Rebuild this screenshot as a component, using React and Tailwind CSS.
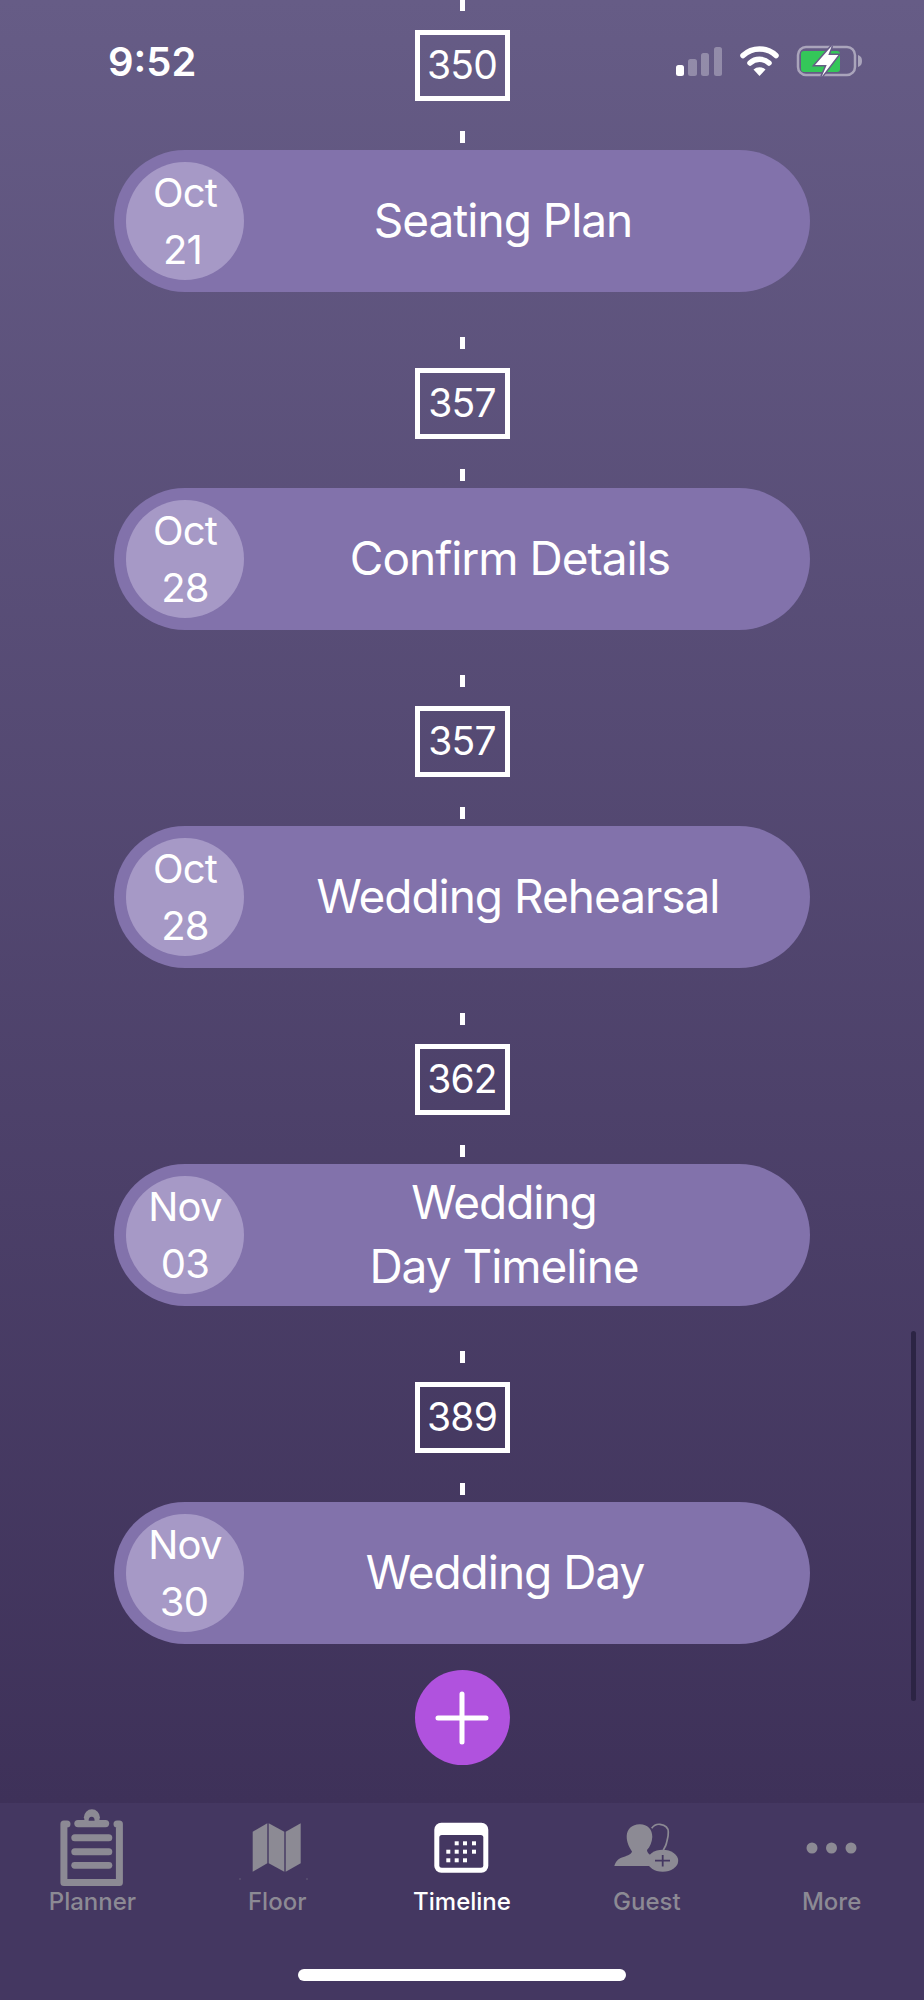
import React from 'react';

const steps = [
  { days: '350', month: 'Oct', day: '21', dayClass: 'pr-[5px]', title: ['Seating Plan'], titleClass: 'pr-[48px]' },
  { days: '357', month: 'Oct', day: '28', title: ['Confirm Details'], titleClass: 'pr-[34px]' },
  { days: '357', month: 'Oct', day: '28', title: ['Wedding Rehearsal'], titleClass: 'pr-[18px]' },
  { days: '362', month: 'Nov', day: '03', title: ['Wedding', 'Day Timeline'], titleClass: 'pr-[46px]' },
  { days: '389', month: 'Nov', day: '30', dayClass: 'pr-[2px]', title: ['Wedding Day'], titleClass: 'pr-[44px]' },
];

function Step({ step, first }) {
  return (
    <>
      {/* days-between connector */}
      <div className={first ? 'h-[11px] w-[5px] bg-white' : 'mt-[45px] h-[12px] w-[5px] bg-white'} />
      <div className="mt-[19px] flex h-[71px] w-[95px] items-center justify-center border-[5px] border-white pb-[2px] text-[39px] leading-none tracking-[-0.02em] text-white">
        {step.days}
      </div>
      <div className="mt-[30px] h-[12px] w-[5px] bg-white" />

      <div className="mt-[7px] flex h-[142px] w-[696px] items-center rounded-[71px] bg-[#8272ab] pl-[12px] text-white">
        <div className="flex h-[118px] w-[118px] shrink-0 flex-col items-center justify-center rounded-full bg-[#a699c6] pb-[1px] text-[40px] leading-[57px] tracking-[-0.02em]">
          <span>{step.month}</span>
          <span className={step.dayClass}>{step.day}</span>
        </div>
        <div className={`flex flex-1 flex-col items-center pb-[2px] text-[46px] leading-[64px] tracking-[-0.022em] ${step.titleClass}`}>
          {step.title.map((line) => (
            <span key={line}>{line}</span>
          ))}
        </div>
      </div>
    </>
  );
}

function StatusIcons() {
  return (
    <svg className="absolute left-[670px] top-[40px]" width="200" height="44" viewBox="670 40 200 44">
      <rect x="676" y="65" width="8" height="11" rx="2.5" fill="#fff" />
      <rect x="688" y="59" width="9" height="17" rx="2.5" fill="#fff" fillOpacity="0.3" />
      <rect x="701" y="53" width="8" height="23" rx="2.5" fill="#fff" fillOpacity="0.3" />
      <rect x="714" y="47" width="8" height="29" rx="2.5" fill="#fff" fillOpacity="0.3" />
      <path d="M743 55.5a24 24 0 0 1 33 0" fill="none" stroke="#fff" strokeWidth="5.5" strokeLinecap="round" />
      <path d="M750 63a14 14 0 0 1 19 0" fill="none" stroke="#fff" strokeWidth="5.5" strokeLinecap="round" />
      <path d="M753.5 69.5a9 9 0 0 1 12 0L759.5 76z" fill="#fff" />
      <rect x="798" y="47" width="57" height="28" rx="8" fill="none" stroke="#fff" strokeOpacity="0.45" strokeWidth="2.5" />
      <path d="M858 55c3 1 4 3 4 6s-1 5-4 6z" fill="#fff" fillOpacity="0.45" />
      <rect x="801" y="51" width="39" height="21" rx="3" fill="#34c759" />
      <path d="M831.700 46 815 65h11.700l-5 11.700L838.300 55h-10z" fill="#fff" stroke="#665c86" strokeWidth="3" paintOrder="stroke" />
    </svg>
  );
}

const grey = '#8c8a94';
const barColor = '#443761';

function PlannerIcon() {
  return (
    <svg width="80" height="80" viewBox="0 0 80 80" fill="none">
      <path d="M15 15H11.900V73.500H67.400V15H65" stroke={grey} strokeWidth="7" strokeLinecap="round" strokeLinejoin="round" />
      <path d="M26 14.600H53.500" stroke={grey} strokeWidth="7.400" strokeLinecap="round" />
      <circle cx="39.900" cy="8.300" r="8" fill={grey} />
      <path d="M36.600 11.700a3 4 0 0 1 6 0z" fill={barColor} />
      <rect x="19.300" y="25.300" width="41" height="7" rx="3.500" fill={grey} />
      <rect x="19.300" y="39.300" width="41" height="7" rx="3.500" fill={grey} />
      <rect x="19.300" y="53" width="41" height="6.700" rx="3.350" fill={grey} />
    </svg>
  );
}

function FloorIcon() {
  return (
    <svg width="80" height="80" viewBox="0 0 80 80" fill={grey}>
      <path d="M15.700 22.700 30.300 14.300V54.300L15.700 62.700z" />
      <path d="M31.700 14.300 47.300 22.700V62.700L31.700 54.300z" />
      <path d="M48.700 22.700 63.700 14.300V54.300L48.700 62.700z" />
      <circle cx="3" cy="70" r="0.700" fillOpacity="0.6" />
      <circle cx="70" cy="70" r="0.700" fillOpacity="0.6" />
    </svg>
  );
}

function TimelineIcon() {
  const dots = [
    [34.7, 34.3], [43, 34.3], [52, 34.3],
    [26.3, 42.7], [34.7, 42.7], [43, 42.7], [52, 42.7],
    [26.3, 51.3], [34.7, 51.3], [43, 51.3],
  ];
  return (
    <svg width="80" height="80" viewBox="0 0 80 80">
      <rect x="12.300" y="13.700" width="54" height="50" rx="7" fill="#fff" />
      <rect x="17.300" y="26" width="44" height="32.700" rx="2.500" fill={barColor} />
      {dots.map(([x, y]) => (
        <rect key={`${x}-${y}`} x={x - 2} y={y - 2} width="4" height="4" fill="#fff" />
      ))}
    </svg>
  );
}

function GuestIcon() {
  return (
    <svg width="80" height="80" viewBox="0 0 80 80">
      <path d="M44.700 19.300C47 16 50 15 53 15.300C58 16 61.300 19 61.300 23C61.500 28 60 31 59.500 34C59 37 57.500 39 56.300 41" fill="none" stroke={grey} strokeWidth="1.700" />
      <path
        fill={grey}
        d="M32.500 15.300C40 15 45.500 20 45.300 28C45 33 43 38 40 41C40 44 43 46 47 48L48 57H7.300C9 52 11 50 15 48.500C19 47 24 46 25 42.500C22 38 19.500 33 19.700 27C20 20 25 15.500 32.500 15.300z"
      />
      <ellipse cx="55.700" cy="51.700" rx="15.500" ry="11" fill={grey} />
      <path d="M48 51.700H63M55.700 46V57.500" stroke={barColor} strokeWidth="1.800" />
    </svg>
  );
}

function MoreIcon() {
  return (
    <svg width="80" height="80" viewBox="0 0 80 80" fill={grey}>
      <circle cx="20" cy="39" r="5.500" />
      <circle cx="39.500" cy="39" r="5.500" />
      <circle cx="59" cy="39" r="5.500" />
    </svg>
  );
}

const tabs = [
  { label: 'Planner', icon: PlannerIcon },
  { label: 'Floor', icon: FloorIcon },
  { label: 'Timeline', icon: TimelineIcon, active: true },
  { label: 'Guest', icon: GuestIcon },
  { label: 'More', icon: MoreIcon },
];

export default function App() {
  return (
    <div className="relative flex h-[2000px] w-[924px] flex-col overflow-hidden font-['Inter',sans-serif]">
      <main className="flex flex-1 flex-col items-center bg-gradient-to-b from-[#665c86] to-[#3e3159]">
        {steps.map((step, i) => (
          <Step key={step.title[0] + i} step={step} first={i === 0} />
        ))}
        <button className="mt-[26px] flex h-[95px] w-[95px] items-center justify-center rounded-full bg-[#b052de]">
          <svg width="56" height="56" viewBox="0 0 56 56" fill="none" stroke="#fff" strokeWidth="5" strokeLinecap="round">
            <path d="M28 4v48M4 28h48" />
          </svg>
        </button>
      </main>

      <nav className="relative h-[197px] bg-[#443761] pt-[6px]">
        <div className="grid grid-cols-5">
          {tabs.map((tab) => (
            <div key={tab.label} className="flex flex-col items-center">
              <tab.icon />
              <span className={tab.active ? 'text-[24px] font-medium leading-[26px] text-white' : 'text-[24px] font-medium leading-[26px] text-[#8c8a94]'}>
                {tab.label}
              </span>
            </div>
          ))}
        </div>
        <div className="absolute bottom-[19px] left-[298px] h-[12px] w-[328px] rounded-full bg-white" />
      </nav>

      {/* status bar and scroll thumb sit over the page */}
      <span className="absolute left-[108px] top-[40px] text-[40px] font-semibold leading-[44px] text-white">9:52</span>
      <StatusIcons />
      <div className="absolute left-[911px] top-[1331px] h-[370px] w-[5px] rounded-full bg-[#2c2444]" />
    </div>
  );
}
